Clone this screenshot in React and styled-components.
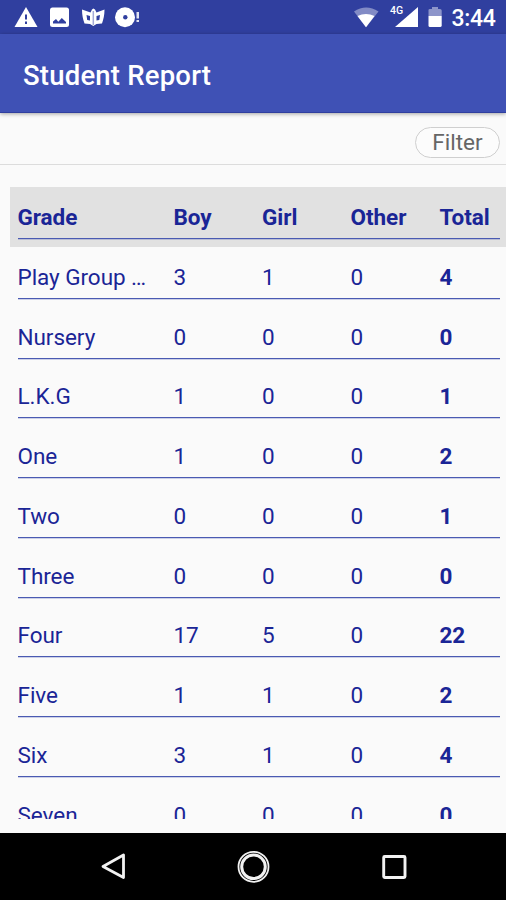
import React from "react";
import styled, { createGlobalStyle } from "styled-components";

const GlobalStyle = createGlobalStyle`
  * { box-sizing: border-box; }
  body { margin: 0; background: #fafafa; font-family: Roboto, "Noto Sans", sans-serif; }
`;

const Screen = styled.div`
  display: flex;
  flex-direction: column;
  width: 506px;
  height: 900px;
  overflow: hidden;
  background: #fafafa;
`;

const StatusBar = styled.div`
  flex: none;
  display: flex;
  height: 34px;
  background: #303f9f;
`;

const StatusIcons = styled.svg`
  display: block;
  flex: none;
`;

const Clock = styled.div`
  padding-left: 1.5px;
  color: #fff;
  font-size: 23px;
  font-weight: 500;
  letter-spacing: -0.3px;
  line-height: 37px;
  white-space: nowrap;
`;

const AppBar = styled.header`
  flex: none;
  height: 79px;
  padding-left: 23px;
  background: #3f51b5;
  border-bottom: 1px solid #303f9f;
  box-shadow: 0 1px 4px rgba(0, 0, 0, 0.35);
`;

const Title = styled.h1`
  margin: 0;
  color: #fff;
  font-size: 27.5px;
  font-weight: 500;
  letter-spacing: 0.2px;
  line-height: 84px;
`;

const FilterBar = styled.div`
  flex: none;
  display: flex;
  justify-content: flex-end;
  height: 52px;
  padding: 14px 6px 0 0;
  border-bottom: 1px solid #dcdcdc;
`;

const FilterButton = styled.button`
  width: 85px;
  height: 31px;
  padding: 0;
  border: 1.5px solid #cfcfcf;
  border-radius: 16px;
  background: #fcfcfc;
  color: #666;
  font-family: inherit;
  font-size: 22.5px;
  line-height: 29px;
`;

const Report = styled.main`
  flex: none;
  height: 632px;
  margin: 22px 0 14px 10px;
  overflow: hidden;
`;

const Row = styled.div`
  height: 59.75px;
  padding: 10px 6px 0 7.5px;
  color: #1a2596;
  font-size: 22.5px;
  font-weight: ${(p) => (p.$head ? 700 : 400)};
  background: ${(p) => (p.$head ? "#e1e1e1" : "transparent")};
`;

const Cells = styled.div`
  display: grid;
  grid-template-columns: 156px 88.5px 88.5px 89px 1fr;
  height: 42px;
  line-height: 41px;
  border-bottom: 1px solid #4a5ab2;
  box-shadow: 0 1px 0 rgba(66, 83, 174, 0.25);
`;

const Cell = styled.div`
  white-space: nowrap;
  letter-spacing: -0.05px;
  font-weight: ${(p) => (p.$strong ? 700 : "inherit")};
`;

const NavBar = styled.nav`
  flex: none;
  display: flex;
  height: 67px;
  background: #000;
`;

const rows = [
  ["Play Group …", 3, 1, 0, 4],
  ["Nursery", 0, 0, 0, 0],
  ["L.K.G", 1, 0, 0, 1],
  ["One", 1, 0, 0, 2],
  ["Two", 0, 0, 0, 1],
  ["Three", 0, 0, 0, 0],
  ["Four", 17, 5, 0, 22],
  ["Five", 1, 1, 0, 2],
  ["Six", 3, 1, 0, 4],
  ["Seven", 0, 0, 0, 0],
];

function TableRow({ values, head }) {
  return (
    <Row $head={head}>
      <Cells>
        {values.map((v, i) => (
          <Cell key={i} $strong={i === 4}>{v}</Cell>
        ))}
      </Cells>
    </Row>
  );
}

function Notifications() {
  return (
    <StatusIcons width="350" height="34" viewBox="0 0 350 34" fill="#fff">
      <path d="M26 7 37.5 27H14.5Z" />
      <path d="M25 14.5h2v5h-2zM25 21.5h2v2.5h-2z" fill="#303f9f" />
      <rect x="50" y="7.5" width="19" height="19.5" rx="2.5" />
      <path d="M53 23.5V21.5L56 19l2.3 2.8 3.5-3.8 4.2 4v1.5Z" fill="#303f9f" />
      <path d="M82 9.5 90.500 12.500 92 9.500 93.300 8.500 95 9.500 96.500 12.500 104.500 9.500C104.500 15 103.500 19 102 23.500L96.500 24 93.300 26 90 24 84.500 23.500C83 19 82 15 82 9.500Z" />
      <path d="M93.300 11V25" stroke="#a3aad8" strokeWidth="1.500" />
      <path d="m86.500 15 3.500 1v4.500l-2.800-.5ZM100 15l-3.500 1v4.500l2.800-.5Z" fill="#303f9f" />
      <circle cx="125" cy="17.3" r="10" />
      <circle cx="125.3" cy="17.3" r="2.2" fill="#303f9f" />
      <path d="M136.5 12h2.5v6.5h-2.5zM136.5 20h2.5v2h-2.5z" opacity=".85" />
    </StatusIcons>
  );
}

function Connectivity() {
  return (
    <StatusIcons width="100" height="34" viewBox="350 0 100 34" fill="#fff">
      <path d="M354 11.4Q366 3.5 378.5 11.4L366 27.3Z" opacity=".4" />
      <path d="M357.5 16Q366 12 374.5 16L366 27.3Z" />
      <text x="390" y="14" fontSize="10.5" fontWeight="500" fontFamily="Roboto, sans-serif">4G</text>
      <path d="M418 7V27H395Z" />
      <path d="M428.5 16V10Q428.5 9 430 9h2V7h6v2h2q1.7 0 1.7 1.500V16Z" opacity=".45" />
      <path d="M428.5 16H441.7V25.5Q441.7 27 440 27H430Q428.5 27 428.5 25.5Z" />
    </StatusIcons>
  );
}

export default function App() {
  return (
    <Screen>
      <GlobalStyle />
      <StatusBar>
        <Notifications />
        <Connectivity />
        <Clock>3:44</Clock>
      </StatusBar>
      <AppBar>
        <Title>Student Report</Title>
      </AppBar>
      <FilterBar>
        <FilterButton>Filter</FilterButton>
      </FilterBar>
      <Report>
        <TableRow head values={["Grade", "Boy", "Girl", "Other", "Total"]} />
        {rows.map((r) => (
          <TableRow key={r[0]} values={r} />
        ))}
      </Report>
      <NavBar>
        <StatusIcons width="506" height="67" viewBox="0 833 506 67" fill="none" stroke="#f2f2f2">
          <path d="M123.5 855V877.5L103 866.5Z" strokeWidth="2.8" strokeLinejoin="round" />
          <circle cx="253.5" cy="866.8" r="15" strokeWidth="1.8" />
          <circle cx="253.5" cy="866.8" r="11.8" strokeWidth="3" />
          <rect x="383.7" y="856.5" width="21.3" height="21" rx="1" strokeWidth="2.9" />
        </StatusIcons>
      </NavBar>
    </Screen>
  );
}
